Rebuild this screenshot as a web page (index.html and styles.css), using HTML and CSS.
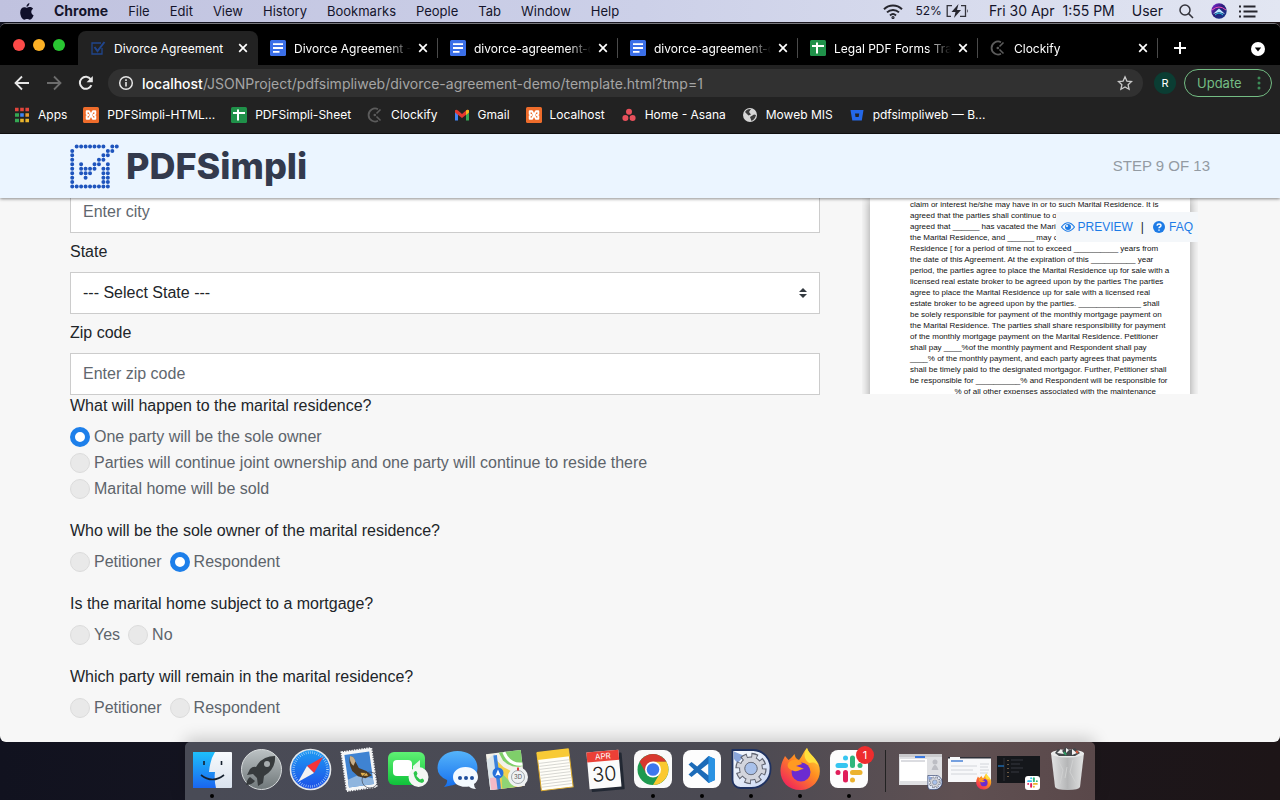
FILE: index.html
```html
<!DOCTYPE html>
<html lang="en">
<head>
<meta charset="utf-8">
<title>Divorce Agreement</title>
<link rel="stylesheet" href="styles.css">
</head>
<body>
<svg class="defs" aria-hidden="true">
  <defs>
    <linearGradient id="gSky" x1="0" y1="0" x2="0" y2="1"><stop offset="0" stop-color="#1e9bf3"/><stop offset="1" stop-color="#1c4fe8"/></linearGradient>
    <linearGradient id="gCyan" x1="0" y1="0" x2="0" y2="1"><stop offset="0" stop-color="#1ec0fb"/><stop offset="1" stop-color="#1a66f0"/></linearGradient>
    <linearGradient id="gPale" x1="0" y1="0" x2="0" y2="1"><stop offset="0" stop-color="#f7fafd"/><stop offset="1" stop-color="#d9e2ee"/></linearGradient>
    <linearGradient id="gSteel" x1="0" y1="0" x2="0" y2="1"><stop offset="0" stop-color="#bcc2c4"/><stop offset="1" stop-color="#6f7779"/></linearGradient>
    <linearGradient id="gGreen" x1="0" y1="0" x2="0" y2="1"><stop offset="0" stop-color="#5ff274"/><stop offset="1" stop-color="#0fc23a"/></linearGradient>
    <linearGradient id="gBubble" x1="0" y1="0" x2="0" y2="1"><stop offset="0" stop-color="#55b4fa"/><stop offset="1" stop-color="#1670ee"/></linearGradient>
    <linearGradient id="gFox" x1="1" y1="0" x2=".2" y2="1"><stop offset="0" stop-color="#ffe94a"/><stop offset=".45" stop-color="#ff9020"/><stop offset="1" stop-color="#f01f5d"/></linearGradient>
    <linearGradient id="gGear" x1="0" y1="0" x2="1" y2="1"><stop offset="0" stop-color="#fbfcff"/><stop offset="1" stop-color="#c9d7f2"/></linearGradient>
    <linearGradient id="gBin" x1="0" y1="0" x2="1" y2="0"><stop offset="0" stop-color="#e2e3e4"/><stop offset=".5" stop-color="#b5b6b7"/><stop offset="1" stop-color="#e2e3e3"/></linearGradient>
    <linearGradient id="gSiri" x1="0" y1="0" x2="1" y2="1"><stop offset="0" stop-color="#8f2be0"/><stop offset=".45" stop-color="#2a1d7a"/><stop offset="1" stop-color="#123a8c"/></linearGradient>
    <symbol id="close" viewBox="0 0 16 16"><path d="M4.200 4.200l7.600 7.600M11.800 4.200l-7.600 7.600" stroke="#fff" stroke-width="1.700" fill="none"/></symbol>
    <symbol id="doc" viewBox="0 0 16 16"><rect width="16" height="16" rx="1.500" fill="#3b6fe8"/><path d="M3 4.200h10M3 8h10M3 11.800h6.500" stroke="#fff" stroke-width="1.800"/></symbol>
    <symbol id="sheet" viewBox="0 0 16 16"><rect width="16" height="16" rx="1.500" fill="#1f9149"/><path d="M2 6h12M7 2.500v11" stroke="#fff" stroke-width="2"/></symbol>
    <symbol id="clockify" viewBox="0 0 16 16"><path d="M11 2.200A6.500 6.500 0 1 0 11 13.800" stroke="#5c5c5c" stroke-width="1.800" fill="none"/><circle cx="7.800" cy="8" r="1.300" fill="#5c5c5c"/><path d="M9.500 6.500l4-4M9.500 9.500l4 4" stroke="#5c5c5c" stroke-width="1.600"/></symbol>
    <symbol id="xampp" viewBox="0 0 16 16"><rect width="16" height="16" rx="1.500" fill="#ee6c2b"/><path d="M3.700 4.200H6L10 11.800H12.300V9L10.500 8L12.300 7V4.200H10L6 11.800H3.700V9L5.500 8L3.700 7Z" fill="none" stroke="#fff" stroke-width="1.900" stroke-linejoin="round"/></symbol>
    <symbol id="gear" viewBox="-20 -20 40 40"><circle r="15" fill="none" stroke="#5f6370" stroke-width="8" stroke-dasharray="7 4.781"/><circle r="11" fill="none" stroke="#5f6370" stroke-width="7"/><circle r="14.500" fill="none" stroke="#d3d5dd" stroke-width="6" stroke-dasharray="4.800 6.588" stroke-dashoffset="-1"/><circle r="10.500" fill="none" stroke="#d3d5dd" stroke-width="5.500"/><circle r="7.500" fill="#a9c1ea" stroke="#6b6f7c" stroke-width="1.200"/></symbol>
    <symbol id="gearApp" viewBox="0 0 40 40"><path d="M1 1H22A18 18 0 0 1 39 20A19 19 0 0 1 20 39H9A8 8 0 0 1 1 31Z" fill="url(#gGear)" stroke="#1f3261" stroke-width="1.800"/><path d="M2.500 2.500L13 7L6 14L2.500 10Z" fill="#8aa6dc"/><use href="#gear" x="3" y="3" width="33" height="33"/></symbol>
    <symbol id="fox" viewBox="0 0 42 44"><path d="M27 1C28 7 35 10 38.500 17C43 28 36 42 21.500 43C8 43.500 0 34 .5 23C.8 17 3 13 5 9L8.500 13C11 11 12 10 14.500 7C15 10 16 12 19 13C22 10 22.500 6 27 1Z" fill="url(#gFox)"/><circle cx="21" cy="25" r="9.500" fill="#6b2bd0"/><path d="M9 15C14 11 20 13 22 17L16 19C20 20 22 21 24 22C20 22 19 25 14 24C8 22 6 19 9 15Z" fill="#ff9a22"/><path d="M27 1C29 7 36 10 38 18C35 15 32 15 29 16C24 12 23 7 27 1Z" fill="#ffe13c"/></symbol>
    <symbol id="slack" viewBox="0 0 28 28"><g stroke-width="5" stroke-linecap="round" fill="none"><path d="M3 10.500h7.500" stroke="#36c5f0"/><path d="M17.500 3v7.500" stroke="#2eb67d"/><path d="M17.500 17.500h7.500" stroke="#ecb22e"/><path d="M10.500 17.500V25" stroke="#e01e5a"/><path d="M10.500 3h0" stroke="#36c5f0"/><path d="M25 10.500h0" stroke="#2eb67d"/><path d="M17.500 25h0" stroke="#ecb22e"/><path d="M3 17.500h0" stroke="#e01e5a"/></g></symbol>
  </defs>
</svg>

<header class="menubar">
  <nav class="menus" aria-label="Menu bar">
    <svg class="apple" viewBox="0 0 14 17"><path d="M9.400 0C9.500 1.800 8.200 3.700 6.500 3.800C6.300 2.100 7.800.4 9.400 0ZM6.900 4.800C7.700 4.800 8.500 4.100 10 4.100C11.200 4.100 12.400 4.700 13.100 5.800C10.400 7.400 10.900 11.100 13.600 12.200C13 13.900 11.500 16.700 9.800 16.700C8.800 16.700 8.400 16.100 7.100 16.100C5.800 16.100 5.300 16.700 4.400 16.700C2.300 16.700 .2 13 .2 9.500C.2 6 2.300 4.200 4.200 4.200C5.500 4.200 6.300 4.800 6.900 4.800Z" fill="#10102a"/></svg>
    <b>Chrome</b><span>File</span><span>Edit</span><span>View</span><span>History</span><span>Bookmarks</span><span>People</span><span>Tab</span><span>Window</span><span>Help</span>
  </nav>
  <div class="status">
    <svg class="wifi" viewBox="0 0 20 15" fill="none" stroke="#26262e" stroke-width="2"><path d="M1 5.200a13 13 0 0 1 18 0M4 8.400a8.600 8.600 0 0 1 12 0M7 11.400a4.500 4.500 0 0 1 6 0"/><circle cx="10" cy="13.500" r=".6"/></svg>
    <span class="pct">52%</span>
    <svg class="battery" viewBox="0 0 23 14"><path d="M6 1.700H1.200V12.300H5M15 1.700h4.500V12.300H14" fill="none" stroke="#33333b" stroke-width="1.300"/><path d="M21 5v4q1.800-2 0-4Z" fill="#33333b"/><path d="M12.500 0L5.500 8h4L8 14l7-8h-4Z" fill="#26262e"/></svg>
    <span class="date">Fri 30 Apr</span><span class="time">1:55 PM</span><span class="user">User</span>
    <svg class="find" viewBox="0 0 15 15" fill="none" stroke="#33333b" stroke-width="1.500"><circle cx="6" cy="6" r="5"/><path d="M9.600 9.600L14 14"/></svg>
    <svg class="siri" viewBox="0 0 16 16"><circle cx="8" cy="8" r="7.700" fill="url(#gSiri)"/><path d="M1 7Q8 1 15 7" stroke="#ef4bb5" fill="none"/><path d="M2 11L8 5.500L14 11L8 9Z" fill="#bfe9ff"/><path d="M4 12Q8 8 12 12" stroke="#2bd0df" fill="none"/></svg>
    <svg class="list" viewBox="0 0 19 13" stroke="#26262e" stroke-width="2"><path d="M0 1.500h2M0 6.500h2M0 11.500h2M4.500 1.500h12M4.500 6.500h14M4.500 11.500h12"/></svg>
  </div>
</header>

<section class="window">
  <div class="tabstrip">
    <div class="lights"><i class="red"></i><i class="amber"></i><i class="green"></i></div>
    <div class="tab active"><svg viewBox="0 0 16 16" fill="none" stroke="#20458c"><path d="M11 3H2v11h10V8" stroke-width="1.300"/><path d="M4.500 7l3 4L14.500 2" stroke-width="2"/></svg><span>Divorce Agreement</span><button aria-label="Close tab"><svg><use href="#close"/></svg></button></div>
    <div class="tab"><svg><use href="#doc"/></svg><span>Divorce Agreement - Google</span><button aria-label="Close tab"><svg><use href="#close"/></svg></button></div>
    <div class="tab"><svg><use href="#doc"/></svg><span>divorce-agreement-demo</span><button aria-label="Close tab"><svg><use href="#close"/></svg></button></div>
    <div class="tab"><svg><use href="#doc"/></svg><span>divorce-agreement-demo</span><button aria-label="Close tab"><svg><use href="#close"/></svg></button></div>
    <div class="tab"><svg><use href="#sheet"/></svg><span>Legal PDF Forms Tracker</span><button aria-label="Close tab"><svg><use href="#close"/></svg></button></div>
    <div class="tab"><svg><use href="#clockify"/></svg><span>Clockify</span><button aria-label="Close tab"><svg><use href="#close"/></svg></button></div>
    <button class="newtab" aria-label="New tab"><svg viewBox="0 0 12 12"><path d="M6 0v12M0 6h12" stroke="#fff" stroke-width="2"/></svg></button>
    <button class="tabmenu" aria-label="Search tabs"><svg viewBox="0 0 14 14"><circle cx="7" cy="7" r="7" fill="#fff"/><path d="M3.800 5.500h6.400L7 9.500Z" fill="#000"/></svg></button>
  </div>

  <div class="toolbar">
    <button aria-label="Back"><svg viewBox="0 0 16 16" fill="none" stroke="#e6e6e6" stroke-width="1.800"><path d="M15 8H2M8 1.500L1.500 8L8 14.500"/></svg></button>
    <button aria-label="Forward"><svg viewBox="0 0 16 16" fill="none" stroke="#6c6c6c" stroke-width="1.800"><path d="M1 8h13M8 1.500L14.500 8L8 14.500"/></svg></button>
    <button aria-label="Reload"><svg viewBox="0 0 16 16" fill="none" stroke="#e6e6e6" stroke-width="2"><path d="M13.400 10.200A6 6 0 1 1 12.800 4.400"/><path d="M14.800 1v6.200H8.600Z" fill="#e6e6e6" stroke="none"/></svg></button>
    <div class="omnibox">
      <svg viewBox="0 0 16 16"><circle cx="8" cy="8" r="6.300" fill="none" stroke="#e6e6e6" stroke-width="1.500"/><path d="M8 7v4.500M8 4.300v1.600" stroke="#e6e6e6" stroke-width="1.600"/></svg>
      <span class="url"><b>localhost</b>/JSONProject/pdfsimpliweb/divorce-agreement-demo/template.html?tmp=1</span>
      <svg viewBox="0 0 16 16"><path d="M8 1.800l1.900 4.300 4.600.5-3.400 3.100 1 4.600L8 11.900l-4.100 2.400 1-4.600L1.500 6.600l4.600-.5Z" fill="none" stroke="#c8c8c8" stroke-width="1.300"/></svg>
    </div>
    <button class="avatar">R</button>
    <button class="update">Update<svg viewBox="0 0 4 14" fill="#3d8b58"><circle cx="2" cy="2" r="1.500"/><circle cx="2" cy="7" r="1.500"/><circle cx="2" cy="12" r="1.500"/></svg></button>
  </div>

  <nav class="bookmarks" aria-label="Bookmarks">
    <a href="#"><svg viewBox="0 0 16 16"><path d="M1 2.500h14" stroke="#e2453c" stroke-width="3.400" stroke-dasharray="3.600 1.600"/><path d="M1 8h4" stroke="#34a853" stroke-width="3.400"/><path d="M6.200 8h3.600" stroke="#4285f4" stroke-width="3.400"/><path d="M11.400 8H15" stroke="#e99a2c" stroke-width="3.400"/><path d="M1 13.500h4" stroke="#34a853" stroke-width="3.400"/><path d="M6.200 13.500H15" stroke="#e9b42c" stroke-width="3.400" stroke-dasharray="3.600 1.600"/></svg>Apps</a>
    <a href="#"><svg><use href="#xampp"/></svg>PDFSimpli-HTML...</a>
    <a href="#"><svg><use href="#sheet"/></svg>PDFSimpli-Sheet</a>
    <a href="#"><svg><use href="#clockify"/></svg>Clockify</a>
    <a href="#"><svg viewBox="0 0 16 16"><path d="M1 3.500L4 5v8.500H1Z" fill="#4285f4"/><path d="M15 3.500L12 5v8.500h3Z" fill="#34a853"/><path d="M1 5V3.500Q2 2 4 3.500L8 7l4-3.500Q14 2 15 3.500V5.500L8 11L1 5.500Z" fill="#e5392f"/><path d="M12 3.500Q14 2 15 3.500V5.500L12 8Z" fill="#f5b91f"/></svg>Gmail</a>
    <a href="#"><svg><use href="#xampp"/></svg>Localhost</a>
    <a href="#"><svg viewBox="0 0 16 16" fill="#e8505b"><circle cx="8" cy="4.800" r="3"/><circle cx="4.400" cy="11" r="3"/><circle cx="11.600" cy="11" r="3"/></svg>Home - Asana</a>
    <a href="#"><svg viewBox="0 0 16 16"><circle cx="8" cy="8" r="7" fill="#d6d6d6"/><path d="M3 5Q5 1.500 9 2L7 5L9 7.500L6.500 8.500ZM8 10l4-2.500 2 .5Q13 12.500 9.500 14Z" fill="#3b3b3b"/></svg>Moweb MIS</a>
    <a href="#"><svg viewBox="0 0 16 16"><path d="M1.500 3h13L12.800 13.500H3.300Z" fill="#2468e8"/><path d="M6 6.500h4.200L9.700 10H6.500Z" fill="#222"/></svg>pdfsimpliweb — B...</a>
  </nav>

  <div class="page">
    <header class="site">
      <a class="brand" href="#">
        <svg viewBox="-.5 -.5 11 10" fill="none" stroke="#1f55bd" stroke-width=".9" stroke-linecap="round" stroke-dasharray="0 1"><path d="M1 0H7.100M9 0h1.100M0 1V9.100M8 1h1.100M7 2h1.100M6 3h1.100M5 4h1.100M2 4v2.100M3 5h2.100M3 6h1.100M3 7h.1M7 5v3.100M8 4v4.100M1 9H8.100"/></svg>
        <span>PDFSimpli</span>
      </a>
      <span class="step">STEP 9 OF 13</span>
    </header>

    <main class="content">
      <form class="form">
        <input class="field" type="text" placeholder="Enter city" aria-label="City">
        <label class="caption" for="state">State</label>
        <div class="selectbox">
          <select class="field" id="state"><option>--- Select State ---</option></select>
          <svg viewBox="0 0 8 10"><path d="M4 0L8 4H0ZM4 10L0 6h8Z" fill="#343a40"/></svg>
        </div>
        <label class="caption" for="zip">Zip code</label>
        <input class="field" id="zip" type="text" placeholder="Enter zip code">

        <fieldset>
          <legend>What will happen to the marital residence?</legend>
          <div class="options stacked">
            <label><input type="radio" name="plan" checked>One party will be the sole owner</label>
            <label><input type="radio" name="plan">Parties will continue joint ownership and one party will continue to reside there</label>
            <label><input type="radio" name="plan">Marital home will be sold</label>
          </div>
        </fieldset>
        <fieldset>
          <legend>Who will be the sole owner of the marital residence?</legend>
          <div class="options">
            <label><input type="radio" name="owner">Petitioner</label>
            <label><input type="radio" name="owner" checked>Respondent</label>
          </div>
        </fieldset>
        <fieldset>
          <legend>Is the marital home subject to a mortgage?</legend>
          <div class="options">
            <label><input type="radio" name="mortgage">Yes</label>
            <label><input type="radio" name="mortgage">No</label>
          </div>
        </fieldset>
        <fieldset>
          <legend>Which party will remain in the marital residence?</legend>
          <div class="options">
            <label><input type="radio" name="remain">Petitioner</label>
            <label><input type="radio" name="remain">Respondent</label>
          </div>
        </fieldset>
      </form>

      <aside class="preview">
        <p class="paper">claim or interest he/she may have in or to such Marital Residence. It is<br>agreed that the parties shall continue to o<br>agreed that ______ has vacated the Mari<br>the Marital Residence, and ______ may c<br>Residence [ for a period of time not to exceed __________ years from<br>the date of this Agreement. At the expiration of this __________ year<br>period, the parties agree to place the Marital Residence up for sale with a<br>licensed real estate broker to be agreed upon by the parties The parties<br>agree to place the Marital Residence up for sale with a licensed real<br>estate broker to be agreed upon by the parties. ______________ shall<br>be solely responsible for payment of the monthly mortgage payment on<br>the Marital Residence. The parties shall share responsibility for payment<br>of the monthly mortgage payment on the Marital Residence. Petitioner<br>shall pay ____%of the monthly payment and Respondent shall pay<br>____% of the monthly payment, and each party agrees that payments<br>shall be timely paid to the designated mortgagor. Further, Petitioner shall<br>be responsible for __________% and Respondent will be responsible for<br>__________% of all other expenses associated with the maintenance</p>
        <div class="tools">
          <a href="#"><svg viewBox="0 0 14 12"><path d="M.5 6Q7-2.500 13.500 6Q7 14.500 .5 6Z" fill="none" stroke="#1d7be6" stroke-width="1.200"/><circle cx="7" cy="6" r="3" fill="#1d7be6"/><circle cx="6" cy="5" r="1.100" fill="#f4f8fb"/></svg>PREVIEW</a>
          <span>|</span>
          <a href="#"><svg viewBox="0 0 12 12"><circle cx="6" cy="6" r="6" fill="#1d7be6"/><path d="M4 4.600Q4.200 3 6 3Q8 3 8 4.600Q8 5.600 6.900 6Q6 6.400 6 7.300M6 8.400v1.400" fill="none" stroke="#fff" stroke-width="1.400"/></svg>FAQ</a>
        </div>
      </aside>
    </main>
  </div>
</section>

<footer class="shelf">
  <nav class="dock" aria-label="Dock">
    <button class="app running" aria-label="Finder"><svg viewBox="0 0 49 58"><rect x="5" y="10" width="39" height="36" rx="1" fill="url(#gPale)"/><path d="M5 10H27Q22 18 21 30H27Q26 38 28 46H5Z" fill="url(#gCyan)"/><path d="M16 19v4M33.500 19v4" stroke="#14202e" stroke-width="1.600"/><path d="M13 33Q24.500 42 36 33" fill="none" stroke="#14202e" stroke-width="1.600"/></svg></button>
    <button class="app" aria-label="Launchpad"><svg viewBox="0 0 49 58"><circle cx="24.500" cy="27.500" r="20" fill="url(#gSteel)" stroke="#d8dcdd"/><path d="M38 14Q39 27 27 34L26 41L21 44L20 36L16 32L10 33L13 27Q16 24 19 25Q25 14 38 14ZM13 35L18 39Q15 43 9 43Q10 37 13 35Z" fill="#373b3d"/><circle cx="30" cy="22" r="3" fill="#a7adaf"/></svg></button>
    <button class="app" aria-label="Safari"><svg viewBox="0 0 49 58"><circle cx="24.500" cy="27.500" r="20" fill="url(#gSky)" stroke="#e3e7ea" stroke-width="1.600"/><circle cx="24.500" cy="27.500" r="17" fill="none" stroke="#b5d9f8" stroke-width="2.500" stroke-dasharray=".6 1.600"/><path d="M37 15L28 31L21 24Z" fill="#f2343a"/><path d="M12 40L21 24L28 31Z" fill="#f2f2f2"/></svg></button>
    <button class="app" aria-label="Mail"><svg viewBox="0 0 49 58"><g transform="rotate(-8 24 27)"><rect x="9" y="8" width="30" height="39" fill="#f5f6f7" stroke="#f5f6f7" stroke-width="2" stroke-dasharray="1.500 1"/><rect x="11.500" y="11" width="25" height="33" fill="#3f83d2"/><path d="M11.500 36L22 33L36.500 38V44H11.500Z" fill="#8fb5de"/><path d="M17 13Q21 14 21.500 19L24 26L31 30L36 35L29 37L22 34L17 28Q14 20 17 13Z" fill="#4b3923"/><path d="M17 13Q21 14 21.500 19L19 23Q15 19 17 13Z" fill="#c9b08a"/><path d="M25 31l6 1 1 3-6-1Z" fill="#e3b24f"/></g><circle cx="35" cy="38" r="8" fill="none" stroke="#353943" stroke-width="1" opacity=".6"/></svg></button>
    <button class="app" aria-label="FaceTime"><svg viewBox="0 0 49 58"><rect x="4" y="10" width="37" height="33" rx="6" fill="url(#gGreen)"/><rect x="9" y="18" width="19" height="16" rx="4" fill="#fff"/><path d="M29 24L36 18V34L29 29Z" fill="#e8f7ea"/><circle cx="34.500" cy="35" r="10" fill="#f4f6f4"/><path d="M29.500 31Q32 27 33.500 31.500L32.500 34L36 37.500L38.500 36.500Q42 39 38 41Q31 40 29.500 31Z" fill="#2cc64b"/></svg></button>
    <button class="app" aria-label="Messages"><svg viewBox="0 0 49 58"><path d="M24.500 9C36 9 44.500 16 44.500 26C44.500 36 36 42 25 42C22 42 18 44 11 45Q15 41 14 38Q4.500 34 4.500 26C4.500 16 13 9 24.500 9Z" fill="url(#gBubble)"/><path d="M32.500 25C40 25 45 29.500 45 35C45 38 43.500 40.500 41 42Q41 45 43 47Q38 46.500 36 44.500C27 46 20 42 20 35C20 29.500 25 25 32.500 25Z" fill="#f4faff"/><g fill="#1e4f9d"><circle cx="27" cy="36" r="2"/><circle cx="33" cy="36" r="2"/><circle cx="39" cy="36" r="2"/></g></svg></button>
    <button class="app" aria-label="Maps"><svg viewBox="0 0 49 58"><g transform="rotate(-7 24 28)"><rect x="6" y="10" width="35" height="36" fill="#f4f1e9"/><path d="M19 10H41V26Q30 28 22 18Z" fill="#7fcf6a"/><path d="M24 10Q28 24 41 24" stroke="#fff" stroke-width="3" fill="none"/><path d="M6 16L15 10V46H6Z" fill="#dbe5ea"/><path d="M14 46V15L22 25L38 36V46Z" fill="#f2cf4d"/><path d="M19 30L31 46H18Z" fill="#8fd475"/><path d="M7 34h7v12H7Z" fill="#f3b9c6"/><path d="M15 12V46" stroke="#3b82dd" stroke-width="3.500"/></g><circle cx="16" cy="31" r="5.500" fill="#2671db"/><path d="M16 27.500L18.800 34L16 32.700L13.200 34Z" fill="#fff"/><circle cx="36" cy="35" r="10" fill="#eff2f3"/><circle cx="36" cy="35" r="6.500" fill="none" stroke="#8a9297" stroke-width=".8"/><path d="M36 25.500v3" stroke="#e23b3b" stroke-width="2"/><text x="36" y="37" class="t3d">3D</text></svg></button>
    <button class="app" aria-label="Notes"><svg viewBox="0 0 49 58"><g transform="rotate(-7 24 28)"><rect x="8" y="9" width="32" height="38" fill="#fffef8" stroke="#d8a72a"/><rect x="8" y="8" width="32" height="8" fill="#f8ca36"/><path d="M9 19.500h30M9 22.500h30M9 25.500h30M9 28.500h30M9 31.500h30M9 34.500h30M9 37.500h30M9 40.500h30M9 43.500h30" stroke="#cfcfca" stroke-width=".8"/></g></svg></button>
    <button class="app" aria-label="Calendar"><svg viewBox="0 0 49 58"><g transform="rotate(-5 24 28)"><rect x="10" y="12" width="33" height="37" rx="1" fill="#222833"/><rect x="8" y="9" width="32" height="37" fill="#fbfbfb"/><path d="M8 9H40V19H8Z" fill="#ec4036"/><text x="24" y="17" class="tmonth">APR</text><text x="24" y="39" class="tday">30</text></g></svg></button>
    <button class="app running" aria-label="Chrome"><svg viewBox="0 0 49 58"><rect x="5" y="8" width="38" height="38" rx="8" fill="#fafafa"/><circle cx="24" cy="27.500" r="15.500" fill="#1e9a4f"/><path d="M10.600 19.800A15.500 15.500 0 0 1 37.400 19.800L24 20Q19 20 17.300 31.400Z" fill="#d8382f"/><path d="M37.400 19.800A15.500 15.500 0 0 1 24 43L30.800 31.400L24 19.800Z" fill="#fbc92f"/><circle cx="24" cy="27.500" r="8" fill="#fff"/><circle cx="24" cy="27.500" r="6.300" fill="#3d77ee"/></svg></button>
    <button class="app running" aria-label="Visual Studio Code"><svg viewBox="0 0 49 58"><rect x="5" y="8" width="38" height="38" rx="8" fill="#fdfdfd"/><path d="M30.500 14L37 17V38L30.500 41L10.500 22.500L13.500 20L30.500 33.500V21.500L13.500 35L10.500 32.500Z" fill="#1c6bb8"/><path d="M30.500 14L37 17V38L30.500 41Z" fill="#2a92e2"/></svg></button>
    <button class="app running" aria-label="Utility"><svg viewBox="0 0 49 58"><use href="#gearApp" x="4" y="7" width="41" height="40"/></svg></button>
    <button class="app running" aria-label="Firefox"><svg viewBox="0 0 49 58"><use href="#fox" x="4" y="5" width="42" height="44"/></svg></button>
    <button class="app running" aria-label="Slack"><svg viewBox="0 0 49 58"><rect x="5" y="8" width="38" height="38" rx="8" fill="#fdfdfd"/><use href="#slack" x="10" y="13" width="28" height="28"/></svg><span class="badge">1</span></button>
    <i class="rule"></i>
    <button class="app" aria-label="Utility window"><svg viewBox="0 0 49 58"><rect x="3" y="12" width="43" height="31" fill="#dfe0e3"/><path d="M3 13.500H46" stroke="#c9c9cc" stroke-width="3"/><path d="M19 15h10" stroke="#3b78de" stroke-width="2"/><rect x="4" y="17" width="27" height="22" fill="#fff"/><path d="M5 19h24" stroke="#b7b9c2"/><circle cx="39" cy="20" r="2.500" fill="#bdbec4"/><path d="M35.500 28Q39 18 42.500 28Z" fill="#bdbec4"/><use href="#gearApp" x="31" y="33" width="16" height="15"/></svg></button>
    <button class="app" aria-label="Firefox window"><svg viewBox="0 0 49 58"><rect x="3" y="15" width="43" height="25" fill="#f7f8fa"/><path d="M3 15.800H46" stroke="#2e3038" stroke-width="1.600" stroke-dasharray="2 10 40 0"/><path d="M6 19h12" stroke="#4a83d6" stroke-width="1.500"/><path d="M6 24h26M6 28h22M6 32h26M35 22h9M35 25h8M35 28h9M35 31h8" stroke="#c9ccd2" stroke-width=".8"/><use href="#fox" x="31" y="31" width="16" height="17"/></svg></button>
    <button class="app" aria-label="Slack window"><svg viewBox="0 0 49 58"><rect x="3" y="14" width="43" height="27" fill="#15171b"/><path d="M10 16v23" stroke="#303339"/><path d="M4 24h6" stroke="#1f67a7" stroke-width="1.500"/><path d="M14 18v20" stroke="#8b7152" stroke-width="1.500" stroke-dasharray="1 3"/><path d="M17 18h12M17 22h9M17 26h12M17 30h8" stroke="#3f4349" stroke-width=".8"/><rect x="31" y="34" width="15" height="14" rx="3" fill="#fff"/><use href="#slack" x="33" y="35" width="11" height="11"/></svg></button>
    <button class="app" aria-label="Trash"><svg viewBox="0 0 49 58"><path d="M8 11H41L37 45Q36 48 24.500 48Q13 48 12 45Z" fill="url(#gBin)"/><path d="M15 18L20 28L17 42M30 18L27 30L33 41M24 25L22 36" stroke="#cfd0d0" fill="none"/><ellipse cx="24.500" cy="11.500" rx="16.500" ry="4" fill="#e9eaea"/><path d="M12 11L15 7L19 9L23 5L27 8L32 6L37 11L32 14H16Z" fill="#44484b"/><path d="M14 11l4-4 3 5ZM23 6l3 2-3 3ZM29 7l5 4-5 2Z" fill="#f2f2f2"/><path d="M21 10l2 3" stroke="#2c9b62" stroke-width="2"/><path d="M33 9l2 2" stroke="#d65a3c" stroke-width="2"/></svg></button>
  </nav>
</footer>
</body>
</html>
```
FILE: styles.css
```css
* { box-sizing: border-box; }

body {
  margin: 0;
  min-height: 100vh;
  display: flex;
  flex-direction: column;
  overflow: hidden;
  background: linear-gradient(90deg, #11121f, #1b1923 50%, #1d1517);
  font-family: Inter, "Liberation Sans", sans-serif;
}

svg { display: block; flex: none; }
.defs { width: 0; height: 0; position: absolute; }
button { border: 0; padding: 0; background: none; font: inherit; color: inherit; }
a { color: inherit; text-decoration: none; }

/* Menu bar */
.menubar {
  height: 22px;
  display: flex;
  justify-content: space-between;
  align-items: center;
  padding: 0 22px 0 20px;
  background: linear-gradient(90deg, #c0c2df, #ccd0e8 50%, #e2e6f2);
  color: #14142b;
  font-size: 14px;
  line-height: 22px;
  white-space: nowrap;
}
.menus, .status { display: flex; align-items: center; }
.menus { gap: 20px; }
.menus span { font-size: 13px; }
.apple { width: 14px; height: 17px; }
.wifi { width: 20px; height: 15px; margin-right: 12px; }
.pct { font-size: 12px; margin-right: 4px; }
.battery { width: 23px; height: 14px; margin-right: 20px; }
.date { margin-right: 8px; }
.time { margin-right: 17px; }
.user { margin-right: 16px; }
.find { width: 15px; height: 15px; margin-right: 17px; }
.siri { width: 16px; height: 16px; margin-right: 12px; }
.list { width: 19px; height: 13px; }

/* Browser window */
.window {
  flex: 1;
  min-height: 0;
  margin-top: 1px;
  display: flex;
  flex-direction: column;
  border-top: 1px solid #77777c;
  border-radius: 6px;
  overflow: hidden;
  background: #222;
  color: #fff;
}
.tabstrip {
  display: flex;
  align-items: flex-end;
  height: 41px;
  background: #000;
  font-size: 12px;
}
.lights { flex: none; display: flex; gap: 8px; width: 78px; padding-left: 13px; align-self: center; }
.lights i { width: 12px; height: 12px; border-radius: 50%; }
.red { background: #fc4a48; }
.amber { background: #fdb125; }
.green { background: #29c732; }
.tab {
  flex: 0 1 180px;
  min-width: 0;
  display: flex;
  align-items: center;
  height: 34px;
  padding: 0 7px 0 12px;
  border-radius: 8px 8px 0 0;
}
.tab.active { background: #222; }
.tab > svg { width: 16px; height: 16px; margin-right: 8px; }
.tab span {
  flex: 1;
  min-width: 0;
  overflow: hidden;
  white-space: nowrap;
  mask-image: linear-gradient(90deg, #000 80%, transparent);
}
.tab.active span { mask-image: none; }
.tab button { margin-left: 4px; }
.tab button svg { width: 16px; height: 16px; }
.tab:not(.active) { background: linear-gradient(#4a4a4a, #4a4a4a) 100% 50% / 1px 20px no-repeat; }
.newtab { margin: 0 auto 11px 16px; }
.newtab svg { width: 12px; height: 12px; }
.tabmenu { margin: 0 15px 9px 0; }
.tabmenu svg { width: 14px; height: 14px; }

.toolbar {
  display: flex;
  align-items: center;
  height: 36px;
  padding: 0 8px 0 14px;
  gap: 16px;
}
.toolbar > button svg { width: 16px; height: 16px; }
.omnibox {
  flex: 1;
  display: flex;
  align-items: center;
  gap: 8px;
  height: 28px;
  margin: 0 -5px 0 -2px;
  padding: 0 10px;
  border-radius: 14px;
  background: #313131;
  color: #a5a5a5;
  font-size: 14px;
}
.omnibox svg { width: 16px; height: 16px; }
.url { flex: 1; }
.url b { font-weight: 500; color: #fff; }
.toolbar .avatar {
  width: 22px;
  height: 22px;
  margin-right: -8px;
  border-radius: 50%;
  background: #0b3d33;
  font-size: 11px;
}
.toolbar .update {
  display: flex;
  align-items: center;
  justify-content: space-between;
  width: 88px;
  height: 28px;
  padding: 0 10px 0 12px;
  border: 1px solid #74bd84;
  border-radius: 14px;
  color: #74bd84;
  font-size: 13px;
}
.toolbar .update svg { width: 4px; height: 14px; }

.bookmarks {
  display: flex;
  align-items: center;
  gap: 16px;
  height: 33px;
  padding: 0 14px 5px;
  border-bottom: 1px solid #111;
  font-size: 12px;
  white-space: nowrap;
}
.bookmarks a { display: flex; align-items: center; gap: 8px; }
.bookmarks svg { width: 16px; height: 16px; }

/* Web page */
.page {
  flex: 1;
  min-height: 0;
  display: flex;
  flex-direction: column;
  background: #f7f7f7;
  color: #212529;
  font: 16px/22px "Liberation Sans", Arial, sans-serif;
}
.site {
  position: relative;
  z-index: 1;
  flex: none;
  display: flex;
  align-items: center;
  justify-content: space-between;
  height: 64px;
  padding: 0 70px;
  background: #ebf5ff;
  box-shadow: 0 1px 3px rgba(0, 0, 0, .45);
}
.brand {
  display: flex;
  align-items: center;
  gap: 7px;
  color: #333a4d;
  font: 800 36px/40px Inter, sans-serif;
}
.brand svg { width: 49px; height: 45px; }
.step { color: #939ba3; font-size: 15px; }

.content {
  flex: 1;
  min-height: 0;
  display: flex;
  align-items: flex-start;
  gap: 42px;
  padding: 0 82px 0 70px;
  overflow: hidden;
}
.form { flex: 1; min-width: 0; margin-top: -7px; }
.field {
  display: block;
  width: 100%;
  height: 42px;
  padding: 0 12px;
  border: 1px solid #ccc;
  border-radius: 0;
  background: #fff;
  color: #212529;
  font: inherit;
  appearance: none;
}
.field::placeholder { color: #5f676e; opacity: 1; }
.caption { display: block; padding: 8px 0 9px; }
.selectbox { position: relative; }
.selectbox svg { position: absolute; right: 13px; top: 16px; width: 8px; height: 10px; }

fieldset { margin: 0 0 18px; padding: 0; border: 0; }
legend { padding: 0; margin-bottom: 7px; }
.options { display: flex; gap: 8px; color: #5d646b; }
.options.stacked { flex-direction: column; gap: 0; }
.options label { display: flex; align-items: center; gap: 4px; height: 26px; }
.options input {
  appearance: none;
  width: 20px;
  height: 20px;
  margin: 0;
  border: 1px solid #dcdcdc;
  border-radius: 50%;
  background: #e9e9e9;
}
.options input:checked { border: 5px solid #1d7fea; background: #fff; }

.preview {
  position: relative;
  flex: none;
  width: 336px;
  height: 196px;
  padding: 0 8px;
  overflow: hidden;
}
.paper {
  margin: 0;
  padding: 1px 0 20px 40px;
  background: #fff;
  box-shadow: 0 0 10px rgba(0, 0, 0, .4);
  color: #111;
  font-size: 8px;
  line-height: 11px;
  white-space: nowrap;
}
.tools {
  position: absolute;
  top: 14px;
  right: 0;
  display: flex;
  align-items: center;
  gap: 8px;
  height: 30px;
  padding: 0 5px;
  background: #f4f7fa;
  font-size: 12px;
}
.tools a { display: flex; align-items: center; gap: 3px; color: #1d7be6; }
.tools svg { width: 14px; height: 12px; }

/* Dock */
.shelf { position: relative; flex: none; display: flex; justify-content: center; }
.dock {
  display: flex;
  height: 58px;
  padding: 0 3px;
  border-radius: 5px 5px 0 0;
  background: linear-gradient(90deg, #494b56, #4b4a53 60%, #5f5052 85%, #5a484a);
  box-shadow: 0 -4px 16px rgba(0, 0, 0, .18);
}
.app { position: relative; width: 49px; height: 58px; }
.app > svg { width: 49px; height: 58px; }
.running::after {
  content: "";
  position: absolute;
  left: 22px;
  bottom: 2px;
  width: 4px;
  height: 4px;
  border-radius: 50%;
  background: #000;
}
.rule { width: 22px; background: linear-gradient(#222, #222) 50% 8px / 1px 42px no-repeat; }
.badge {
  position: absolute;
  top: 4px;
  right: 0;
  width: 18px;
  height: 18px;
  border-radius: 50%;
  background: #ee2d2e;
  color: #fff;
  font-size: 11px;
  line-height: 18px;
  text-align: center;
}
.t3d { font: 6px Inter, sans-serif; fill: #555; text-anchor: middle; }
.tmonth { font: 8px Inter, sans-serif; fill: #fff; text-anchor: middle; }
.tday { font: 300 20px Inter, sans-serif; fill: #222; text-anchor: middle; }
```
